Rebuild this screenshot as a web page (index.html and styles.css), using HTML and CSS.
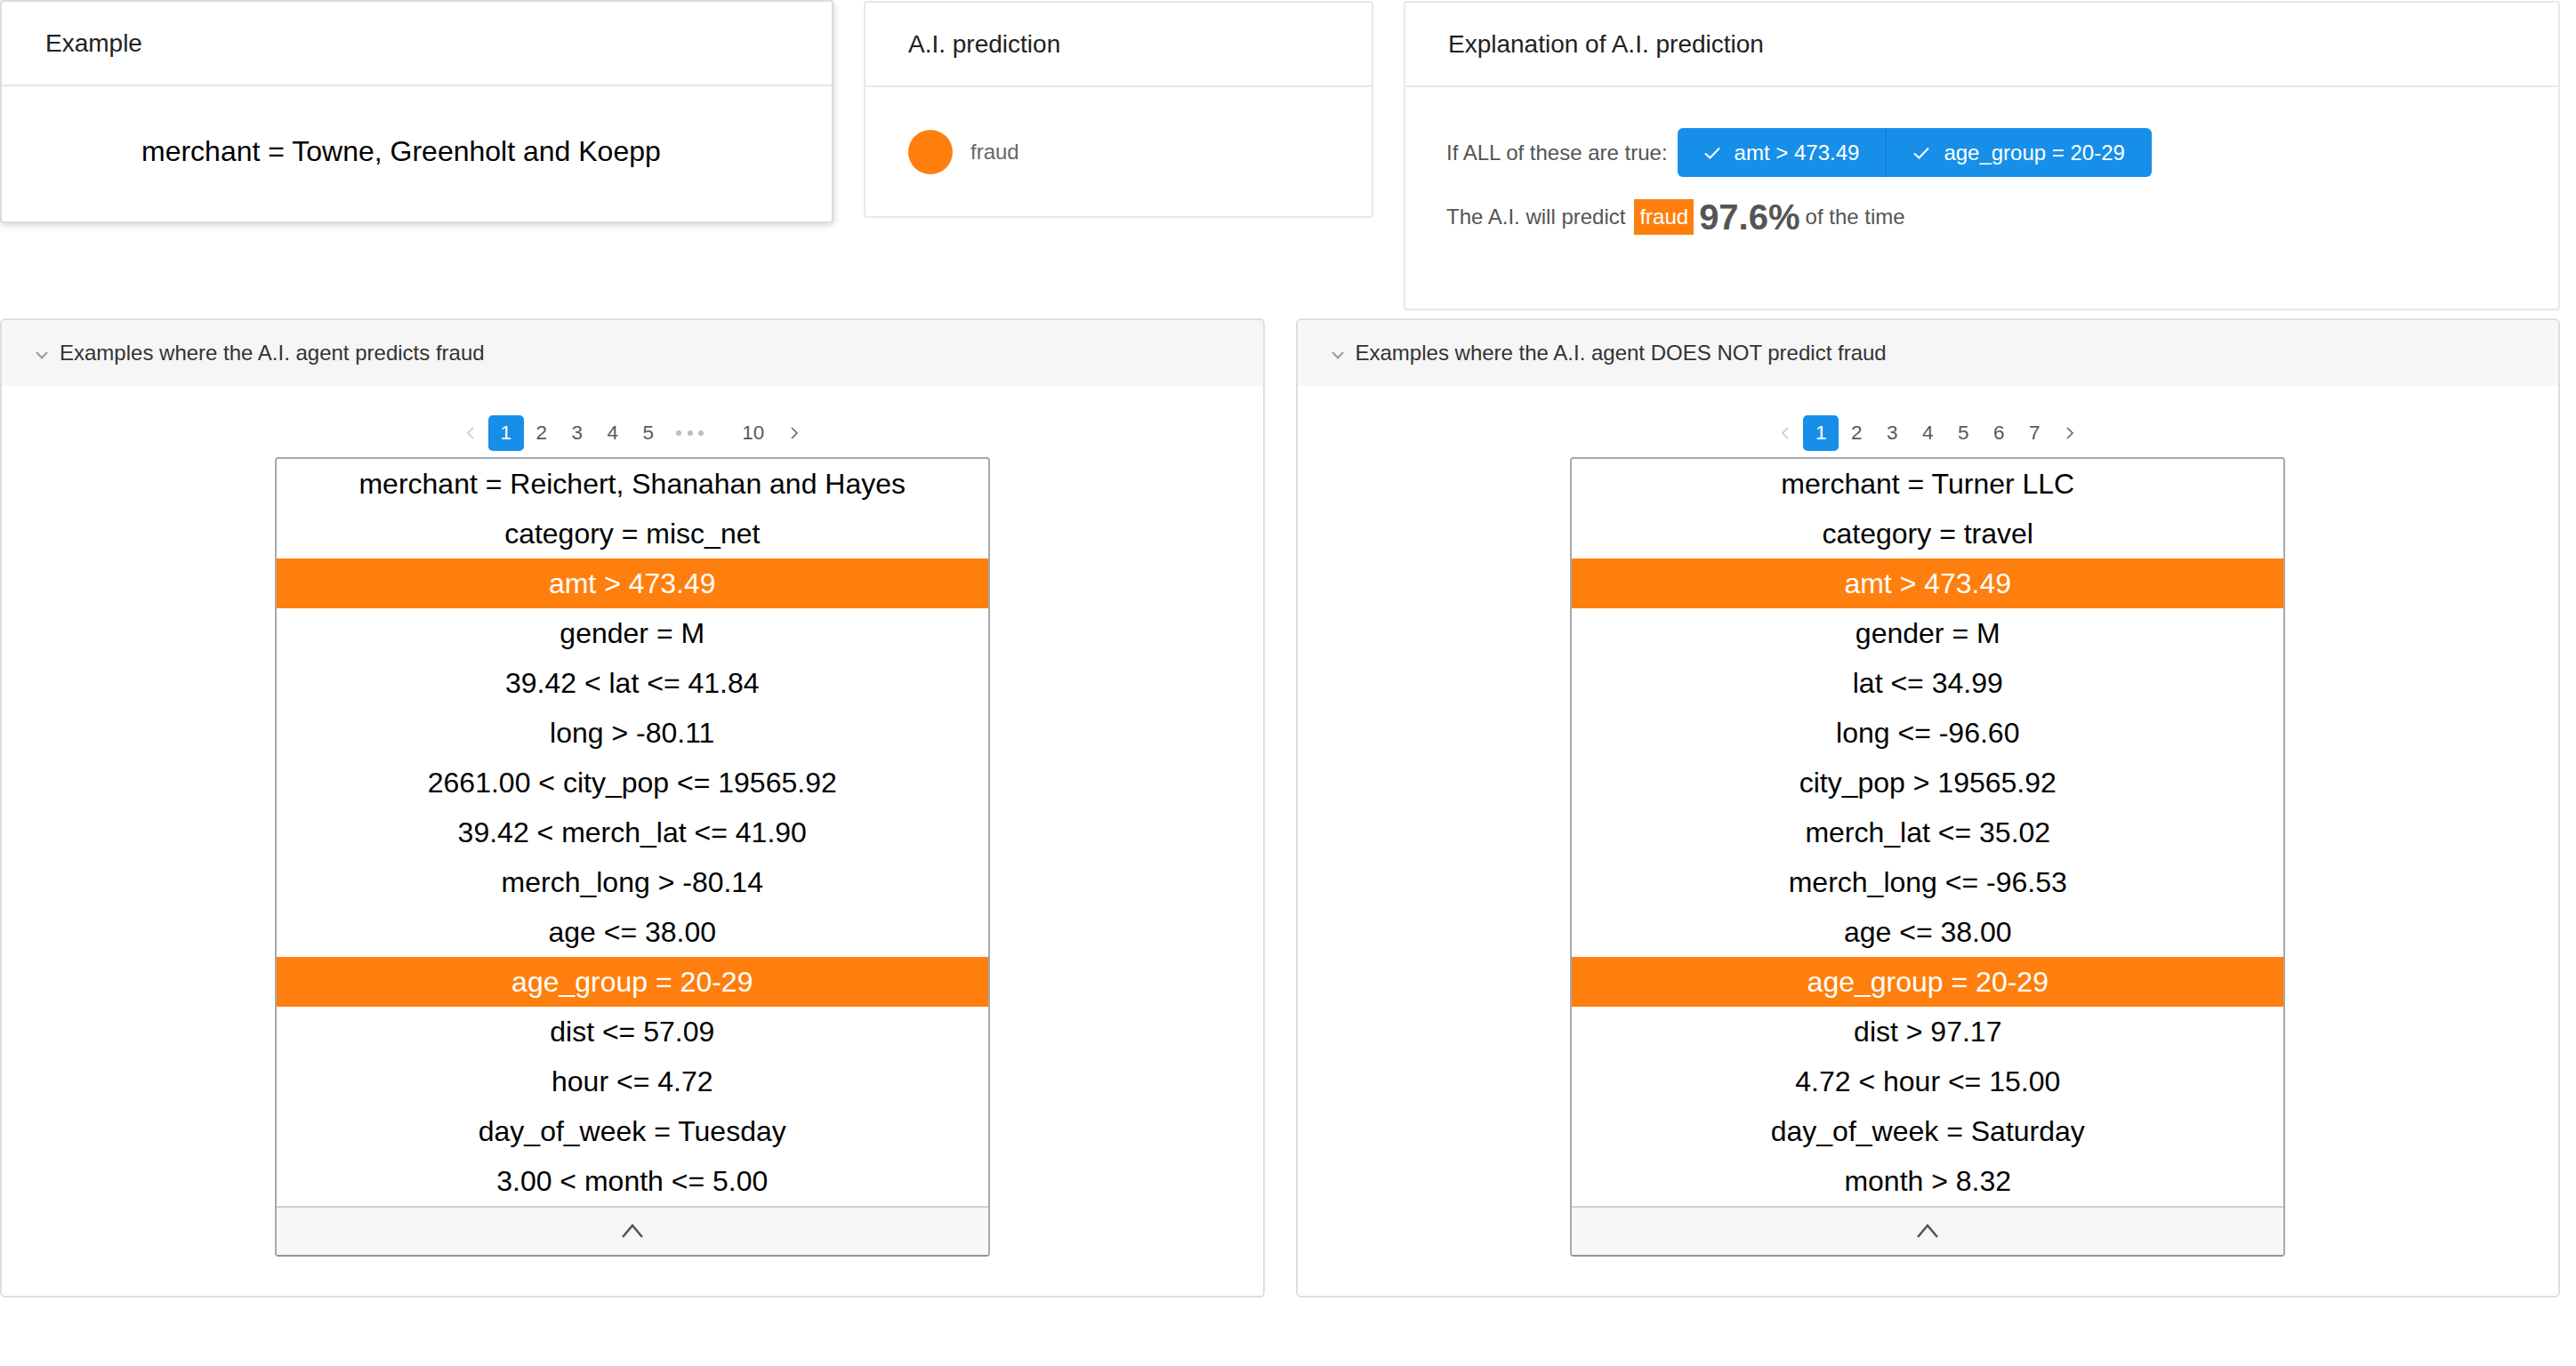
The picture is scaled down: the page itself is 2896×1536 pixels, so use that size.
FILE: index.html
```html
<!DOCTYPE html>
<html lang="en">
<head>
<meta charset="utf-8">
<title>A.I. prediction explanation</title>
<link rel="stylesheet" href="styles.css">
</head>
<body>
<div class="page">
  <div class="top-row">
    <section class="card card-raised">
      <div class="card-head">Example</div>
      <div class="card-body example-body">merchant = Towne, Greenholt and Koepp</div>
    </section>
    <section class="card">
      <div class="card-head">A.I. prediction</div>
      <div class="card-body prediction-body">
        <span class="dot-fraud"></span>
        <span class="pred-label">fraud</span>
      </div>
    </section>
    <section class="card">
      <div class="card-head">Explanation of A.I. prediction</div>
      <div class="card-body explain-body">
        <div class="explain-line">
          <span class="muted">If ALL of these are true:</span>
          <div class="btn-group">
            <span class="btn"><svg class="check" viewBox="0 0 18 14" width="18" height="14"><polyline points="1,7.5 6.5,12.5 17,1.5" fill="none" stroke="#fff" stroke-width="2"/></svg>amt &gt; 473.49</span>
            <span class="btn"><svg class="check" viewBox="0 0 18 14" width="18" height="14"><polyline points="1,7.5 6.5,12.5 17,1.5" fill="none" stroke="#fff" stroke-width="2"/></svg>age_group = 20-29</span>
          </div>
        </div>
        <div class="explain-line result-line">
          <span class="muted">The A.I. will predict</span>
          <span class="tag-fraud">fraud</span>
          <span class="pct">97.6%</span>
          <span class="muted">of the time</span>
        </div>
      </div>
    </section>
  </div>

  <div class="bottom-row">
    <section class="panel">
      <div class="panel-head">
        <svg class="chev-down" viewBox="0 0 14 9" width="14" height="9"><polyline points="1,1 7,7.5 13,1" fill="none" stroke="#999" stroke-width="2"/></svg>
        <span>Examples where the A.I. agent predicts fraud</span>
      </div>
      <div class="panel-body">
        <div class="pager">
          <span class="pg-item pg-arrow disabled"><svg viewBox="0 0 10 16" width="10" height="16"><polyline points="8,2 2,8 8,14" fill="none" stroke="#c8c8c8" stroke-width="1.6"/></svg></span>
          <span class="pg-item active">1</span>
          <span class="pg-item">2</span>
          <span class="pg-item">3</span>
          <span class="pg-item">4</span>
          <span class="pg-item">5</span>
          <span class="pg-item pg-jump"><i></i><i></i><i></i></span>
          <span class="pg-item">10</span>
          <span class="pg-item pg-arrow pg-next"><svg viewBox="0 0 10 16" width="10" height="16"><polyline points="2,2 8,8 2,14" fill="none" stroke="#666" stroke-width="1.6"/></svg></span>
        </div>
        <div class="rule-table">
          <div class="rule">merchant = Reichert, Shanahan and Hayes</div>
          <div class="rule">category = misc_net</div>
          <div class="rule hl">amt &gt; 473.49</div>
          <div class="rule">gender = M</div>
          <div class="rule">39.42 &lt; lat &lt;= 41.84</div>
          <div class="rule">long &gt; -80.11</div>
          <div class="rule">2661.00 &lt; city_pop &lt;= 19565.92</div>
          <div class="rule">39.42 &lt; merch_lat &lt;= 41.90</div>
          <div class="rule">merch_long &gt; -80.14</div>
          <div class="rule">age &lt;= 38.00</div>
          <div class="rule hl">age_group = 20-29</div>
          <div class="rule">dist &lt;= 57.09</div>
          <div class="rule">hour &lt;= 4.72</div>
          <div class="rule">day_of_week = Tuesday</div>
          <div class="rule">3.00 &lt; month &lt;= 5.00</div>
          <div class="rule-foot"><svg viewBox="0 0 26 18" width="26" height="18"><polyline points="2,16 13,3 24,16" fill="none" stroke="#555" stroke-width="2.6"/></svg></div>
        </div>
      </div>
    </section>

    <section class="panel">
      <div class="panel-head">
        <svg class="chev-down" viewBox="0 0 14 9" width="14" height="9"><polyline points="1,1 7,7.5 13,1" fill="none" stroke="#999" stroke-width="2"/></svg>
        <span>Examples where the A.I. agent DOES NOT predict fraud</span>
      </div>
      <div class="panel-body">
        <div class="pager">
          <span class="pg-item pg-arrow disabled"><svg viewBox="0 0 10 16" width="10" height="16"><polyline points="8,2 2,8 8,14" fill="none" stroke="#c8c8c8" stroke-width="1.6"/></svg></span>
          <span class="pg-item active">1</span>
          <span class="pg-item">2</span>
          <span class="pg-item">3</span>
          <span class="pg-item">4</span>
          <span class="pg-item">5</span>
          <span class="pg-item">6</span>
          <span class="pg-item">7</span>
          <span class="pg-item pg-arrow"><svg viewBox="0 0 10 16" width="10" height="16"><polyline points="2,2 8,8 2,14" fill="none" stroke="#666" stroke-width="1.6"/></svg></span>
        </div>
        <div class="rule-table">
          <div class="rule">merchant = Turner LLC</div>
          <div class="rule">category = travel</div>
          <div class="rule hl">amt &gt; 473.49</div>
          <div class="rule">gender = M</div>
          <div class="rule">lat &lt;= 34.99</div>
          <div class="rule">long &lt;= -96.60</div>
          <div class="rule">city_pop &gt; 19565.92</div>
          <div class="rule">merch_lat &lt;= 35.02</div>
          <div class="rule">merch_long &lt;= -96.53</div>
          <div class="rule">age &lt;= 38.00</div>
          <div class="rule hl">age_group = 20-29</div>
          <div class="rule">dist &gt; 97.17</div>
          <div class="rule">4.72 &lt; hour &lt;= 15.00</div>
          <div class="rule">day_of_week = Saturday</div>
          <div class="rule">month &gt; 8.32</div>
          <div class="rule-foot"><svg viewBox="0 0 26 18" width="26" height="18"><polyline points="2,16 13,3 24,16" fill="none" stroke="#555" stroke-width="2.6"/></svg></div>
        </div>
      </div>
    </section>
  </div>
</div>
</body>
</html>
```

FILE: styles.css
```css
* { box-sizing: border-box; }

html, body {
  margin: 0;
  padding: 0;
  background: #fff;
}

body {
  font-family: "Liberation Sans", Arial, Helvetica, sans-serif;
  color: #222;
}

.page {
  width: 2878px;
}

/* ---------- top row ---------- */
.top-row {
  display: grid;
  grid-template-columns: 937px 573px 1fr;
  column-gap: 34px;
  align-items: start;
  margin-bottom: 9px;
}

.card {
  background: #fff;
  border: 2px solid #e8e8e8;
  border-radius: 4px;
  margin-top: 1px;
}

.card-raised {
  margin-top: 0;
  border-color: #dcdcdc;
  box-shadow: 0 2px 8px rgba(0, 0, 0, 0.18);
}

.card-head {
  height: 95px;
  padding: 0 48px;
  border-bottom: 2px solid #e8e8e8;
  display: flex;
  align-items: center;
  font-size: 28px;
  color: #222;
}

.card-raised .card-head {
  padding-left: 49px;
}

.example-body {
  height: 152px;
  display: flex;
  align-items: center;
  padding: 0 0 6px 157px;
  font-size: 32px;
  color: #000;
}

.prediction-body {
  height: 145px;
  display: flex;
  align-items: center;
  padding: 0 48px;
  gap: 20px;
}

.dot-fraud {
  width: 50px;
  height: 50px;
  border-radius: 50%;
  background: #ff7f0e;
  flex: none;
}

.pred-label {
  font-size: 24px;
  color: #666;
}

.explain-body {
  padding: 46px 46px 83px;
}

.explain-line {
  display: flex;
  align-items: center;
  font-size: 24px;
}

.muted {
  color: #555;
}

.btn-group {
  display: flex;
  margin-left: 11px;
  background: #178fe9;
  border-radius: 6px;
  overflow: hidden;
}

.btn {
  height: 55px;
  padding: 0 30px;
  display: flex;
  align-items: center;
  gap: 16px;
  color: #fff;
  font-size: 24px;
}

.btn + .btn {
  border-left: 1px solid #0c78cc;
}

.check {
  flex: none;
}

.result-line {
  margin-top: 25px;
  height: 40px;
}

.tag-fraud {
  margin-left: 10px;
  height: 40px;
  line-height: 40px;
  padding: 0 6px;
  background: #ff7f0e;
  color: #fff;
}

.pct {
  margin: 0 6px;
  font-size: 40px;
  font-weight: bold;
  color: #555;
}

/* ---------- bottom row ---------- */
.bottom-row {
  display: grid;
  grid-template-columns: 1fr 1fr;
  column-gap: 35px;
}

.panel {
  border: 2px solid #dedede;
  border-radius: 6px;
  overflow: hidden;
}

.panel-head {
  height: 74px;
  background: #f6f6f6;
  display: flex;
  align-items: center;
  padding-left: 38px;
  gap: 13px;
  font-size: 24px;
  color: #333;
}

.chev-down {
  flex: none;
  margin-top: 4px;
}

.panel-body {
  padding: 33px 0 44px;
  display: flex;
  flex-direction: column;
  align-items: center;
}

.pager {
  display: flex;
  align-items: center;
  height: 40px;
  margin-bottom: 7px;
  font-size: 22.5px;
  color: #595959;
}

.pg-item {
  width: 40px;
  height: 40px;
  display: flex;
  align-items: center;
  justify-content: center;
  border-radius: 5px;
}

.pg-item.active {
  background: #178fe9;
  color: #fff;
}

.pg-jump {
  width: 54px;
  margin-right: 24px;
  gap: 6.5px;
}

.pg-jump i {
  width: 6px;
  height: 6px;
  border-radius: 50%;
  background: #bdbdbd;
}

.pg-next {
  margin-left: 6px;
}

.rule-table {
  width: 804px;
  border: 2px solid #a8a8a8;
  border-bottom-color: #959595;
  border-radius: 4px;
  overflow: hidden;
}

.rule {
  height: 56px;
  line-height: 56px;
  text-align: center;
  font-size: 32px;
  color: #000;
  white-space: nowrap;
}

.rule.hl {
  background: #ff7f0e;
  color: #fff;
}

.rule-foot {
  height: 55px;
  border-top: 2px solid #cfcfcf;
  background: #f7f7f7;
  display: flex;
  align-items: center;
  justify-content: center;
  padding-bottom: 2px;
}
```
